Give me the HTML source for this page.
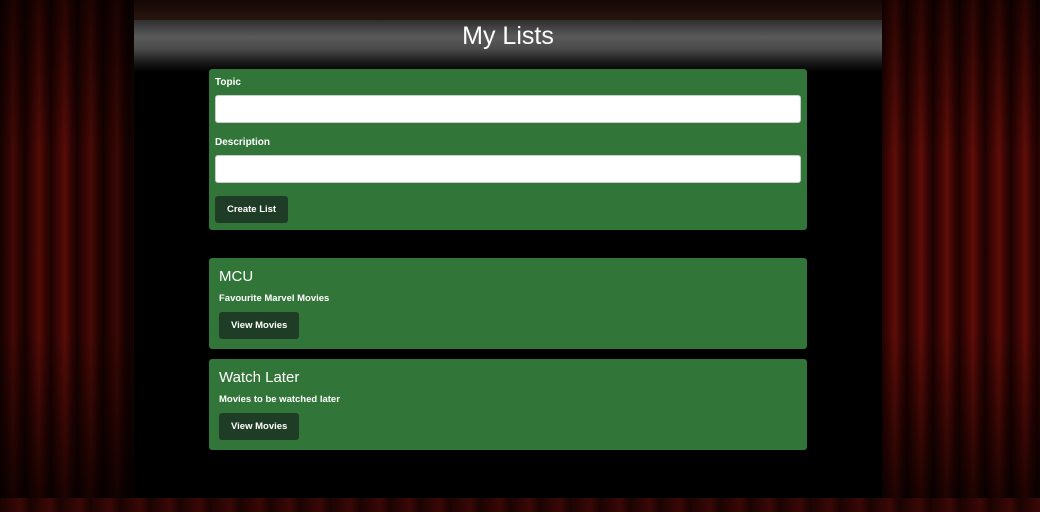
<!DOCTYPE html>
<html><head><style>
*{box-sizing:border-box;margin:0;padding:0}
body{width:1040px;height:512px;overflow:hidden;background:#000;font-family:"Liberation Sans",Arial,sans-serif;position:relative}
.curtL,.curtR{position:absolute;top:0;width:134px;height:512px;background:repeating-linear-gradient(90deg,#250302 0,#4e0805 8px,#6a0f09 13px,#3a0503 20px,#1c0201 26px);}
.curtL{left:0}
.curtR{right:0;width:158px}
.curtL::after,.curtR::after{content:"";position:absolute;inset:0;background:linear-gradient(180deg,rgba(0,0,0,.6),rgba(0,0,0,.1) 30%,rgba(0,0,0,.1) 65%,rgba(0,0,0,.75))}
.curtL::after{background:linear-gradient(180deg,rgba(0,0,0,.6),rgba(0,0,0,.1) 30%,rgba(0,0,0,.1) 65%,rgba(0,0,0,.75)),linear-gradient(90deg,rgba(0,0,0,.4),rgba(0,0,0,0) 40%,rgba(0,0,0,.5))}
.ceil{position:absolute;left:134px;right:158px;top:0;height:22px;background:linear-gradient(#140805,#2a1610)}
.bar{position:absolute;left:134px;right:158px;top:20px;height:42px;background:linear-gradient(#2e2e2e,#5a5a5a 40%,#4a4a4a 70%,#1a1a1a);}
.under{position:absolute;left:134px;right:158px;top:62px;height:10px;background:linear-gradient(#1a1a1a,#000)}
h1{position:absolute;left:134px;right:158px;top:22px;text-align:center;color:#fff;font-weight:normal;font-size:25px}
.seats{position:absolute;left:0;right:0;bottom:0;height:14px;background:repeating-linear-gradient(90deg,#1a0302 0,#3a0806 20px,#1a0302 30px)}
.panel{position:absolute;left:209px;width:598px;background:#327539;border-radius:3px;color:#fff}
label{display:block;font-size:10px;font-weight:bold}
.inp{background:#fff;border:1px solid #ccc;border-radius:3px;height:28px}
.btn{display:inline-block;background:#1f3d26;color:#fff;font-size:9.5px;font-weight:bold;border-radius:3px}
</style></head><body>
<div class="curtL"></div><div class="curtR"></div>
<div class="ceil"></div><div class="bar"></div><div class="under"></div>
<h1>My Lists</h1>
<div class="seats"></div>
<div class="panel" style="top:69px;height:161px;padding:8px 6px">
<label>Topic</label>
<div class="inp" style="margin-top:7px"></div>
<label style="margin-top:14px">Description</label>
<div class="inp" style="margin-top:7px"></div>
<div class="btn" style="margin-top:13px;padding:8px 12px">Create List</div>
</div>
<div class="panel" style="top:258px;height:91px;padding:10px 10px">
<div style="font-size:15px">MCU</div>
<div style="font-size:9.5px;font-weight:bold;margin-top:8px">Favourite Marvel Movies</div>
<div class="btn" style="margin-top:8px;padding:8px 12px">View Movies</div>
</div>
<div class="panel" style="top:359px;height:91px;padding:10px 10px">
<div style="font-size:15px">Watch Later</div>
<div style="font-size:9.5px;font-weight:bold;margin-top:8px">Movies to be watched later</div>
<div class="btn" style="margin-top:8px;padding:8px 12px">View Movies</div>
</div>
</body></html>
